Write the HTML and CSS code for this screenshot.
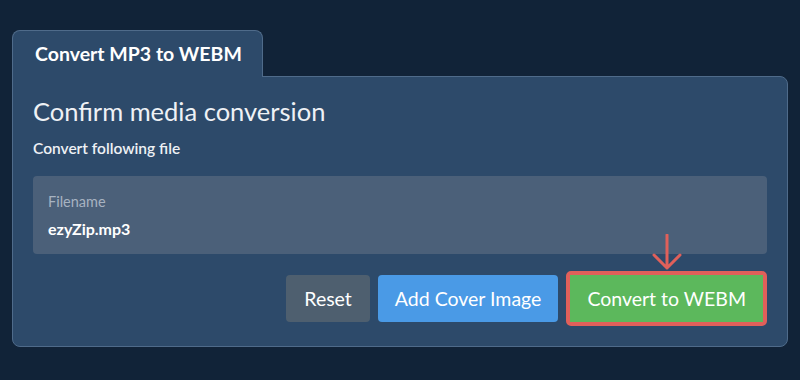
FILE: index.html
```html
<!DOCTYPE html>
<html lang="en">
<head>
  <meta charset="UTF-8">
  <meta name="viewport" content="width=device-width, initial-scale=1.0">
  <title>Convert MP3 to WEBM</title>
  <link rel="stylesheet" href="styles.css">
</head>
<body>
  <div class="tabs">
    <div class="tab active">Convert MP3 to WEBM</div>
  </div>
  <div class="panel">
    <h2>Confirm media conversion</h2>
    <p class="sub">Convert following file</p>
    <div class="file-box">
      <div class="file-label">Filename</div>
      <div class="file-name">ezyZip.mp3</div>
    </div>
    <div class="button-row">
      <button class="btn btn-reset">Reset</button>
      <button class="btn btn-blue">Add Cover Image</button>
      <span class="highlight">
        <svg class="arrow" width="32" height="38" viewBox="0 0 32 38">
          <path d="M16 1 V34 M3 21 L16 34 L29 21" fill="none" stroke="#e0605a" stroke-width="3" stroke-linecap="round" stroke-linejoin="round"/>
        </svg>
        <button class="btn btn-green">Convert to WEBM</button>
      </span>
    </div>
  </div>
</body>
</html>
```

FILE: styles.css
```css
:root {
  --bg: #112338;
  --panel: #2d4a6a;
  --border: #4f6b8a;
  --field: #4b6079;
  --text: #ffffff;
}
body {
  margin: 0;
  padding: 30px 12px 0;
  background-color: var(--bg);
  color: var(--text);
  font-family: 'Lato', 'Open Sans', sans-serif;
}
.tabs {
  display: flex;
}
.tab {
  position: relative;
  z-index: 1;
  background-color: var(--panel);
  border: 1px solid var(--border);
  border-bottom: none;
  border-radius: 8px 8px 0 0;
  padding: 0 20px 0 22px;
  height: 46px;
  line-height: 46px;
  margin-bottom: -1px;
  font-size: 19.5px;
  font-weight: bold;
}
.panel {
  background-color: var(--panel);
  border: 1px solid var(--border);
  border-radius: 0 8px 8px 8px;
  padding: 19px 20px 20px;
}
h2 {
  margin: 0;
  font-size: 25.5px;
  font-weight: normal;
  line-height: 31px;
  color: #eef1f5;
}
.sub {
  margin: 12px 0 0;
  font-size: 15.5px;
  font-weight: 600;
  line-height: 18px;
  color: #eef1f5;
}
.file-box {
  margin-top: 19px;
  background-color: var(--field);
  border-radius: 4px;
  padding: 18px 15px 16px;
}
.file-label {
  font-size: 14.5px;
  line-height: 16px;
  color: #a7b3c1;
}
.file-name {
  margin-top: 9px;
  font-size: 16px;
  font-weight: bold;
  line-height: 19px;
}
.button-row {
  display: flex;
  justify-content: flex-end;
  align-items: center;
  gap: 8px;
  margin-top: 17px;
}
.btn {
  border: none;
  border-radius: 4px;
  color: #fff;
  font-family: inherit;
  font-size: 19.5px;
  height: 47px;
  padding: 0 17px;
  cursor: pointer;
}
.btn-reset { background-color: #4e5f6f; padding: 0 18px; }
.btn-blue  { background-color: #4a9ae6; }
.btn-green { background-color: #5cb85c; border-radius: 0; display: block; }
.highlight {
  position: relative;
  border: 4px solid #e0605a;
  border-radius: 5px;
}
.arrow {
  position: absolute;
  left: 50%;
  bottom: 100%;
  margin-left: -16px;
  margin-bottom: 3px;
}
```
